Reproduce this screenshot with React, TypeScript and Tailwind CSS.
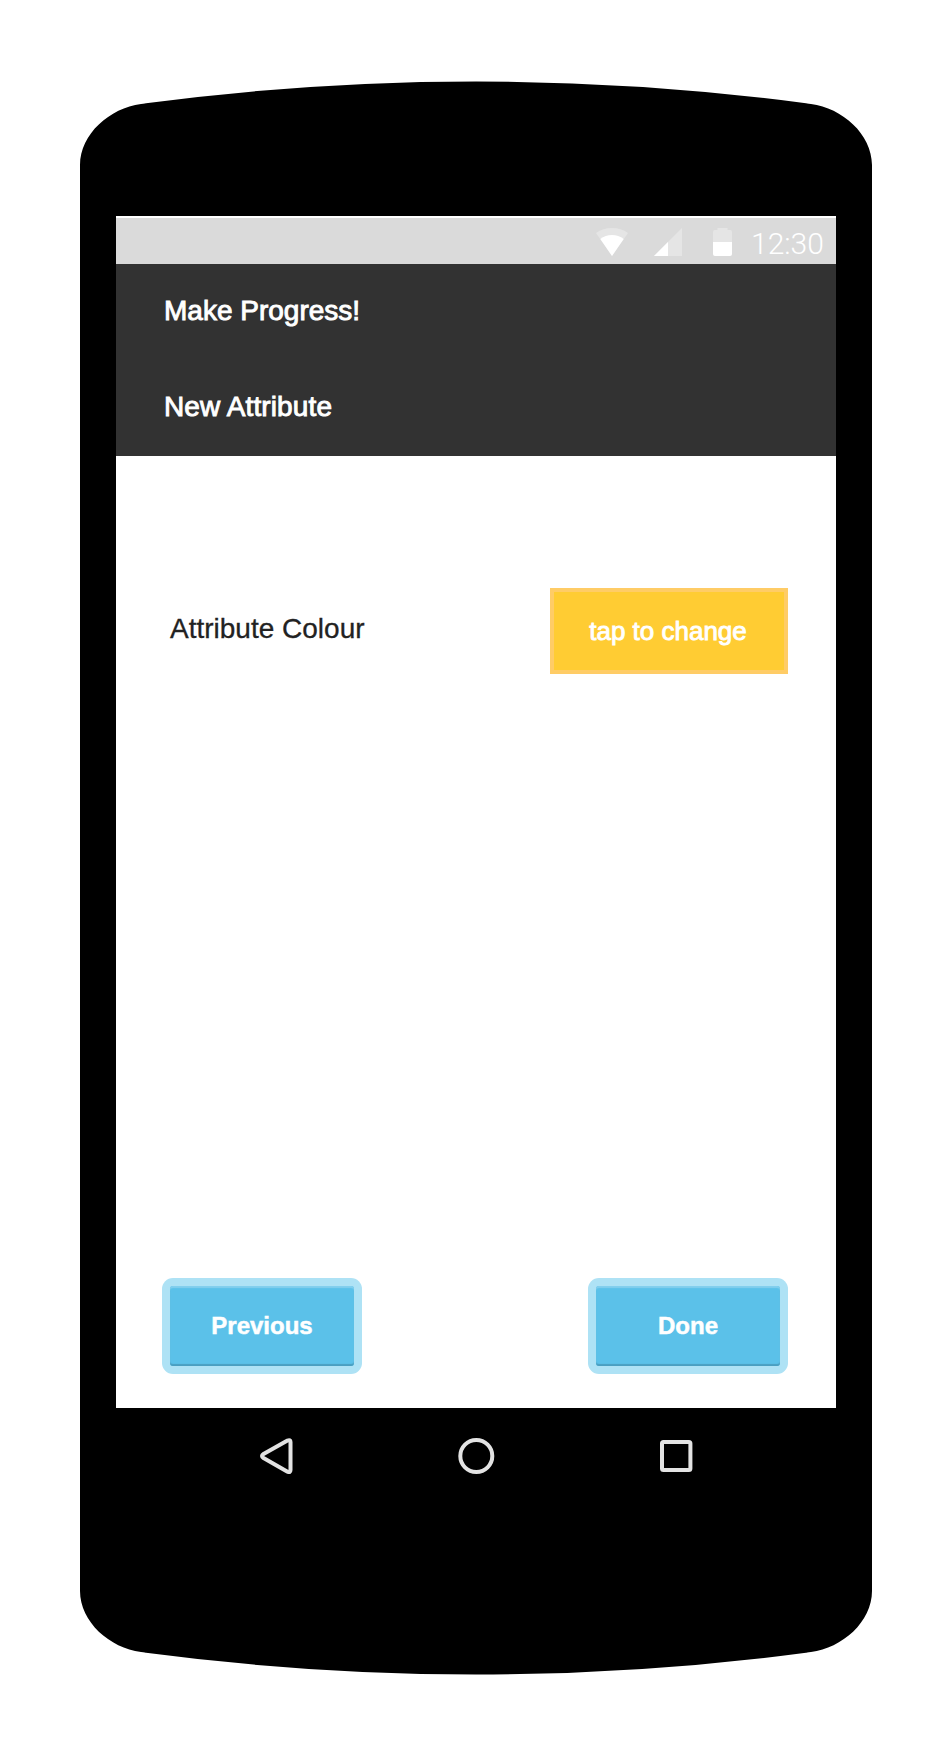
import React from "react";

const CAP_PATH =
  "M0 86V85C0 54 30 28 61 24Q66 23.3 66 23.3Q396 -20.3 726 23.3Q726 23.3 731 24C762 28 792 54 792 85V86Z";

function BezelCap({ bottom = false }: { bottom?: boolean }) {
  return (
    <svg
      width="792"
      height="86"
      viewBox="0 0 792 86"
      className={bottom ? "block rotate-180" : "block"}
      aria-hidden="true"
    >
      <path d={CAP_PATH} fill="#000" />
    </svg>
  );
}

function StatusBar() {
  return (
    <div className="flex h-12 items-start border-t-2 border-white bg-[#dadada] pl-[480px]">
      <svg width="32" height="28" viewBox="0 0 32 28" className="mt-[10px] shrink-0">
        <path d="M16 28L0 5Q7 0 16 0T32 5Z" fill="#e5e5e5" />
        <path d="M16 28L4.300 11Q9.500 7 16 7T27.700 11Z" fill="#fff" />
      </svg>
      <svg width="28" height="28" viewBox="0 0 28 28" className="mt-[10px] ml-[25.500px] shrink-0">
        <path d="M28 0V28H0Z" fill="#e5e5e5" />
        <path d="M14 14V28H0Z" fill="#fff" />
      </svg>
      <svg width="19" height="28" viewBox="0 0 19 28" className="mt-[10px] ml-[31.500px] shrink-0">
        <path d="M0 14V4Q0 2 2 2H4.500V0H14.500V2H17Q19 2 19 4V14Z" fill="#e5e5e5" />
        <path d="M0 14H19V26Q19 28 17 28H2Q0 28 0 26Z" fill="#fff" />
      </svg>
      <span className="mt-2 ml-[19px] font-['Roboto'] text-[30px] leading-[36px] font-light text-white">
        12:30
      </span>
    </div>
  );
}

function ActionButton({ label }: { label: string }) {
  return (
    <button className="flex h-24 w-[200px] rounded-[11px] bg-[#aee2f5] p-2">
      <span className="flex h-20 w-full items-center justify-center rounded-[3px] bg-[#5bc1e9] pb-[1px] text-2xl font-bold text-white shadow-[inset_0_2px_1px_#82cfee,inset_0_-2px_1px_#4a9fc1] [-webkit-text-stroke:0.500px_white]">
        {label}
      </span>
    </button>
  );
}

function NavBar() {
  return (
    <div className="flex h-24 items-center bg-black">
      <svg width="720" height="96" viewBox="0 0 720 96" fill="none" stroke="#e3e3e3" strokeWidth="4">
        <path
          d="M147.500 46L171.500 32.500Q174.500 31.300 174.500 34V62Q174.500 65 171.500 63.700L147.500 50Q144.500 48 147.500 46Z"
          strokeLinejoin="round"
        />
        <circle cx="360.300" cy="48" r="16" />
        <rect x="546" y="34" width="28.400" height="28" rx="1.500" />
      </svg>
    </div>
  );
}

export default function App() {
  return (
    <div className="h-[1756px] w-[952px] bg-white px-20 pt-20 font-['Liberation_Sans',Arial,sans-serif]">
      <BezelCap />
      <div className="h-[1424px] bg-black px-9 pt-[50px]">
        <StatusBar />
        <header className="flex h-48 flex-col bg-[#323232] pl-12 text-[28px] text-white [-webkit-text-stroke:0.900px_white]">
          <h1 className="flex h-24 items-center pb-[3px]">Make Progress!</h1>
          <h2 className="flex h-24 items-center pb-[3px] tracking-[0.120px]">New Attribute</h2>
        </header>
        <main className="flex h-[952px] flex-col justify-between bg-white pt-[132px] pr-12 pb-[34px] pl-[46px]">
          <div className="flex h-[86px] items-center justify-between">
            <span className="pb-1 pl-2 text-[28px] text-[#222] [-webkit-text-stroke:0.300px_#222]">Attribute Colour</span>
            <button className="h-[86px] w-[238px] border-4 border-[#ffcc66] bg-[#ffcc33] pr-0.5 text-[26px] text-white [-webkit-text-stroke:0.900px_white]">
              tap to change
            </button>
          </div>
          <div className="flex justify-between">
            <ActionButton label="Previous" />
            <ActionButton label="Done" />
          </div>
        </main>
        <NavBar />
      </div>
      <BezelCap bottom />
    </div>
  );
}
